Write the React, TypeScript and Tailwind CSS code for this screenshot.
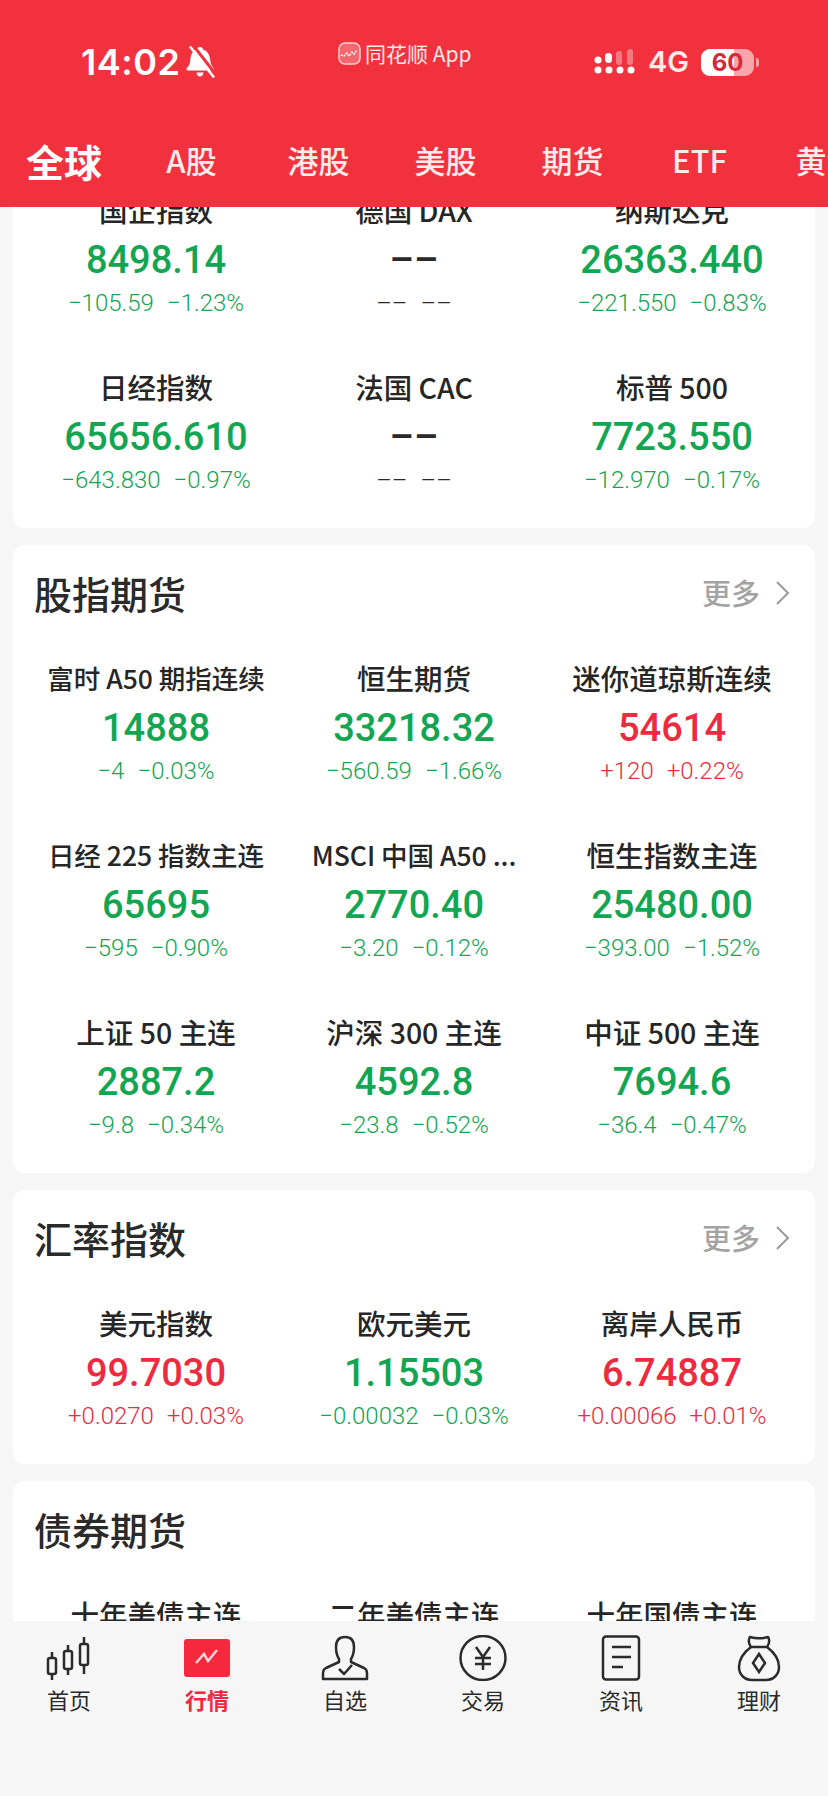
type Quote = { name: string; value: string; change: string; pct: string; tone: "up" | "down" | "none"; small?: boolean };

const cardOne: Quote[] = [
  { name: "国企指数", value: "8498.14", change: "−105.59", pct: "−1.23%", tone: "down" },
  { name: "德国 DAX", value: "––", change: "––", pct: "––", tone: "none" },
  { name: "纳斯达克", value: "26363.440", change: "−221.550", pct: "−0.83%", tone: "down" },
  { name: "日经指数", value: "65656.610", change: "−643.830", pct: "−0.97%", tone: "down" },
  { name: "法国 CAC", value: "––", change: "––", pct: "––", tone: "none" },
  { name: "标普 500", value: "7723.550", change: "−12.970", pct: "−0.17%", tone: "down" },
];

const futures: Quote[] = [
  { name: "富时 A50 期指连续", value: "14888", change: "−4", pct: "−0.03%", tone: "down", small: true },
  { name: "恒生期货", value: "33218.32", change: "−560.59", pct: "−1.66%", tone: "down" },
  { name: "迷你道琼斯连续", value: "54614", change: "+120", pct: "+0.22%", tone: "up" },
  { name: "日经 225 指数主连", value: "65695", change: "−595", pct: "−0.90%", tone: "down", small: true },
  { name: "MSCI 中国 A50 ...", value: "2770.40", change: "−3.20", pct: "−0.12%", tone: "down", small: true },
  { name: "恒生指数主连", value: "25480.00", change: "−393.00", pct: "−1.52%", tone: "down" },
  { name: "上证 50 主连", value: "2887.2", change: "−9.8", pct: "−0.34%", tone: "down" },
  { name: "沪深 300 主连", value: "4592.8", change: "−23.8", pct: "−0.52%", tone: "down" },
  { name: "中证 500 主连", value: "7694.6", change: "−36.4", pct: "−0.47%", tone: "down" },
];

const rates: Quote[] = [
  { name: "美元指数", value: "99.7030", change: "+0.0270", pct: "+0.03%", tone: "up" },
  { name: "欧元美元", value: "1.15503", change: "−0.00032", pct: "−0.03%", tone: "down" },
  { name: "离岸人民币", value: "6.74887", change: "+0.00066", pct: "+0.01%", tone: "up" },
];

const bonds = ["十年美债主连", "二年美债主连", "十年国债主连"];
const tabs = ["A股", "港股", "美股", "期货", "ETF", "黄金"];

const toneClass = {
  up: "text-[#ee2a40]",
  down: "text-[#12a552]",
  none: "text-[#2a2a2a]",
};

const cjk = "font-['Noto_Sans_CJK_SC',sans-serif]";
const num = "font-['Roboto','Noto_Sans_CJK_SC',sans-serif]";

function QuoteCell({ q }: { q: Quote }) {
  return (
    <div className="flex flex-col items-center">
      <div className={`h-[36px] leading-[36px] font-medium whitespace-nowrap text-[#262626] ${q.small ? "text-[26.5px]" : "text-[28.5px]"} ${cjk}`}>{q.name}</div>
      <div className={`mt-[10px] h-[44px] text-[38px] leading-[44px] font-medium ${num} ${toneClass[q.tone]}`}>{q.value}</div>
      <div className={`mt-[6px] flex h-[30px] gap-[13px] text-[24px] leading-[30px] font-light ${num} ${toneClass[q.tone]}`}>
        <span>{q.change}</span>
        <span>{q.pct}</span>
      </div>
    </div>
  );
}

function QuoteGrid({ items }: { items: Quote[] }) {
  return (
    <div className="grid grid-cols-3 gap-y-[51px] px-[14px] pb-[33px]">
      {items.map((q) => (
        <QuoteCell key={q.name} q={q} />
      ))}
    </div>
  );
}

function CardTitle({ title, more }: { title: string; more?: boolean }) {
  return (
    <div className="mb-[43px] flex h-[48px] items-center justify-between pr-[25px] pl-[21px]">
      <div className={`text-[38px] leading-[48px] font-medium text-[#2a2a2a] ${cjk}`}>{title}</div>
      {more && (
        <div className="flex items-center gap-[15px]">
          <span className={`text-[29px] font-medium text-[#a3a3a3] ${cjk}`}>更多</span>
          <svg width="15" height="26" viewBox="0 0 15 26" fill="none" stroke="#9a9a9a" strokeWidth="2">
            <path d="M2 2l11 11L2 24" />
          </svg>
        </div>
      )}
    </div>
  );
}

function StatusBar() {
  return (
    <div className="mt-[40px] flex h-[44px] items-center">
      <div className="flex w-[338px] items-center pl-[81px]">
        <span className="font-['Inter',sans-serif] text-[36px] font-semibold tracking-[0.5px] text-white">14:02</span>
        <svg className="ml-[5px]" width="32" height="34" viewBox="0 0 32 34" fill="white">
          <path d="M15 2c1.800 0 3 1 3 2.500 4.500 1.500 6.500 5 7 9.500.5 4 1.500 7 3.500 9 1 1 .5 2.500-.5 2.500H2.500c-1 0-1.500-1.500-.5-2.500 2.500-2.500 3-5 3.500-9.500.5-4.500 2.500-8 6.500-9.500C12 3 13.200 2 15 2z" />
          <path d="M11.500 27.500h7c-.3 2.500-1.800 4-3.500 4s-3.200-1.500-3.500-4z" />
          <path d="M8 0l24 31" stroke="#f1313d" strokeWidth="3" />
          <path d="M5 1.500l24 31" stroke="white" strokeWidth="2.500" />
        </svg>
      </div>
      <div className="flex w-[256px] -translate-y-[9px] items-center">
        <svg width="23" height="23" viewBox="0 0 23 23" fill="none">
          <rect x="1" y="1" width="21" height="21" rx="6" fill="#f5686f" stroke="#ffd0d0" strokeWidth="1.500" />
          <path d="M3 13l3 1 3-3 2 3 3-4 2 2 3-4" stroke="white" strokeWidth="1.500" strokeDasharray="2 1" />
        </svg>
        <span className={`ml-[4px] text-[21px] leading-none text-[#fde9e9] ${cjk}`}>同花顺 App</span>
      </div>
      <div className="flex items-center">
        <svg width="43" height="26" viewBox="0 0 43 26" fill="white">
          <circle cx="4" cy="11" r="3.500" />
          <rect x="11" y="4" width="7" height="10" rx="3.500" />
          <rect x="22" y="2" width="6" height="14" rx="3" fillOpacity="0.35" />
          <rect x="33" y="0" width="6" height="16" rx="3" fillOpacity="0.35" />
          <circle cx="4" cy="21" r="3.500" />
          <circle cx="15" cy="21" r="3.500" />
          <circle cx="26" cy="21" r="3.500" />
          <circle cx="37" cy="21" r="3.500" />
        </svg>
        <span className="ml-[11px] font-['Inter',sans-serif] text-[29px] font-semibold text-[#fdeaea]">4G</span>
        <div className="ml-[12px] flex h-[27px] w-[53px] overflow-hidden rounded-[9px] bg-[#f9a5aa]">
          <div className="h-full w-[33px] shrink-0 bg-white" />
          <span className="-ml-[33px] w-[53px] shrink-0 text-center font-['Inter',sans-serif] text-[24px] leading-[27px] font-bold text-[#d8283c]">60</span>
        </div>
        <div className="ml-[2px] h-[9px] w-[3px] rounded-r-full bg-[#f9a5aa]" />
      </div>
    </div>
  );
}

function Header() {
  return (
    <div className="z-10 h-[207px] shrink-0 overflow-hidden bg-[#f1313d]">
      <StatusBar />
      <div className="mt-[48px] flex h-[56px] items-center overflow-hidden">
        <div className={`w-[128px] shrink-0 text-center text-[38px] font-bold text-white ${cjk}`}>全球</div>
        {tabs.map((t) => (
          <div key={t} className={`w-[127px] shrink-0 text-center text-[31px] font-medium whitespace-nowrap text-[#fdeaea] ${cjk}`}>
            {t}
          </div>
        ))}
      </div>
    </div>
  );
}

const iconStroke = { fill: "none", stroke: "#2b2b2b", strokeWidth: 2.5 };

function NavIcon({ id }: { id: number }) {
  if (id === 0)
    return (
      <svg width="50" height="44" viewBox="0 0 50 44" {...iconStroke}>
        <rect x="4" y="22" width="8" height="16" rx="2" />
        <path d="M8 16v6M8 38v6" />
        <rect x="20" y="15" width="8" height="18" rx="2" />
        <path d="M24 9v6M24 33v6" />
        <rect x="36" y="8" width="8" height="21" rx="2" />
        <path d="M40 1v7M40 29v9" />
      </svg>
    );
  if (id === 1)
    return (
      <svg width="46" height="38" viewBox="0 0 46 38">
        <rect width="46" height="38" rx="3" fill="#f5283e" />
        <path d="M12 24l8-9 4 7 9-11" fill="none" stroke="#fbd5d8" strokeWidth="2.500" />
      </svg>
    );
  if (id === 2)
    return (
      <svg width="48" height="46" viewBox="0 0 48 46" {...iconStroke}>
        <path d="M24 2c-6 0-9 4-9 10 0 5 1 9 3 12v3L5 33c-2 1-3 3-3 5v6h44v-6c0-2-1-4-3-5l-13-6v-3c2-3 3-7 3-12 0-6-3-10-9-10z" strokeLinejoin="round" />
        <path d="M18 34l5 5 8-9" />
      </svg>
    );
  if (id === 3)
    return (
      <svg width="48" height="46" viewBox="0 0 48 46" {...iconStroke}>
        <ellipse cx="24" cy="23" rx="22.500" ry="22" />
        <path d="M17 12l7 10 7-10M16 23h16M16 29h16M24 22v13" />
      </svg>
    );
  if (id === 4)
    return (
      <svg width="40" height="46" viewBox="0 0 40 46" {...iconStroke}>
        <rect x="2" y="1.500" width="36" height="43" rx="3" />
        <path d="M11 12h19M11 22h19M11 32h11" />
      </svg>
    );
  return (
    <svg width="44" height="48" viewBox="0 0 44 48" {...iconStroke}>
      <path d="M13 3c5 1.500 13 1.500 18 0 2 3 1 7-1 10H14c-2-3-3-7-1-10z" strokeLinejoin="round" />
      <path d="M14 13C6 19 2 26 2 33c0 8 6 13 13 13h14c7 0 13-5 13-13 0-7-4-14-12-20" />
      <path d="M22 20l6 9-6 9-6-9z" />
    </svg>
  );
}

function BottomNav() {
  const items = ["首页", "行情", "自选", "交易", "资讯", "理财"];
  return (
    <div className="grid h-[175px] shrink-0 grid-cols-6 bg-[#f6f6f6]">
      {items.map((label, i) => (
        <div key={label} className="flex flex-col items-center pt-[12px]">
          <div className="flex h-[50px] items-center justify-center">
            <NavIcon id={i} />
          </div>
          <div className={`mt-[1px] text-[22px] leading-[30px] ${cjk} ${i === 1 ? "font-bold text-[#f0283e]" : "font-normal text-[#2a2a2a]"}`}>
            {label}
          </div>
        </div>
      ))}
    </div>
  );
}

export default function App() {
  return (
    <div className="flex h-[1796px] w-[828px] flex-col overflow-hidden bg-[#f6f6f6]">
      <Header />
      <div className="min-h-0 flex-1 overflow-hidden">
        <div className="-mt-[15px] flex flex-col gap-[17px] px-[13px]">
          <div className="rounded-b-[12px] bg-white">
            <QuoteGrid items={cardOne} />
          </div>
          <div className="rounded-[12px] bg-white pt-[24px]">
            <CardTitle title="股指期货" more />
            <QuoteGrid items={futures} />
          </div>
          <div className="rounded-[12px] bg-white pt-[24px]">
            <CardTitle title="汇率指数" more />
            <QuoteGrid items={rates} />
          </div>
          <div className="rounded-[12px] bg-white pt-[24px]">
            <CardTitle title="债券期货" />
            <div className="grid grid-cols-3 px-[14px] pb-[33px]">
              {bonds.map((b) => (
                <div key={b} className={`text-center text-[28.5px] leading-[36px] font-medium text-[#262626] ${cjk}`}>
                  {b}
                </div>
              ))}
            </div>
          </div>
        </div>
      </div>
      <BottomNav />
    </div>
  );
}
